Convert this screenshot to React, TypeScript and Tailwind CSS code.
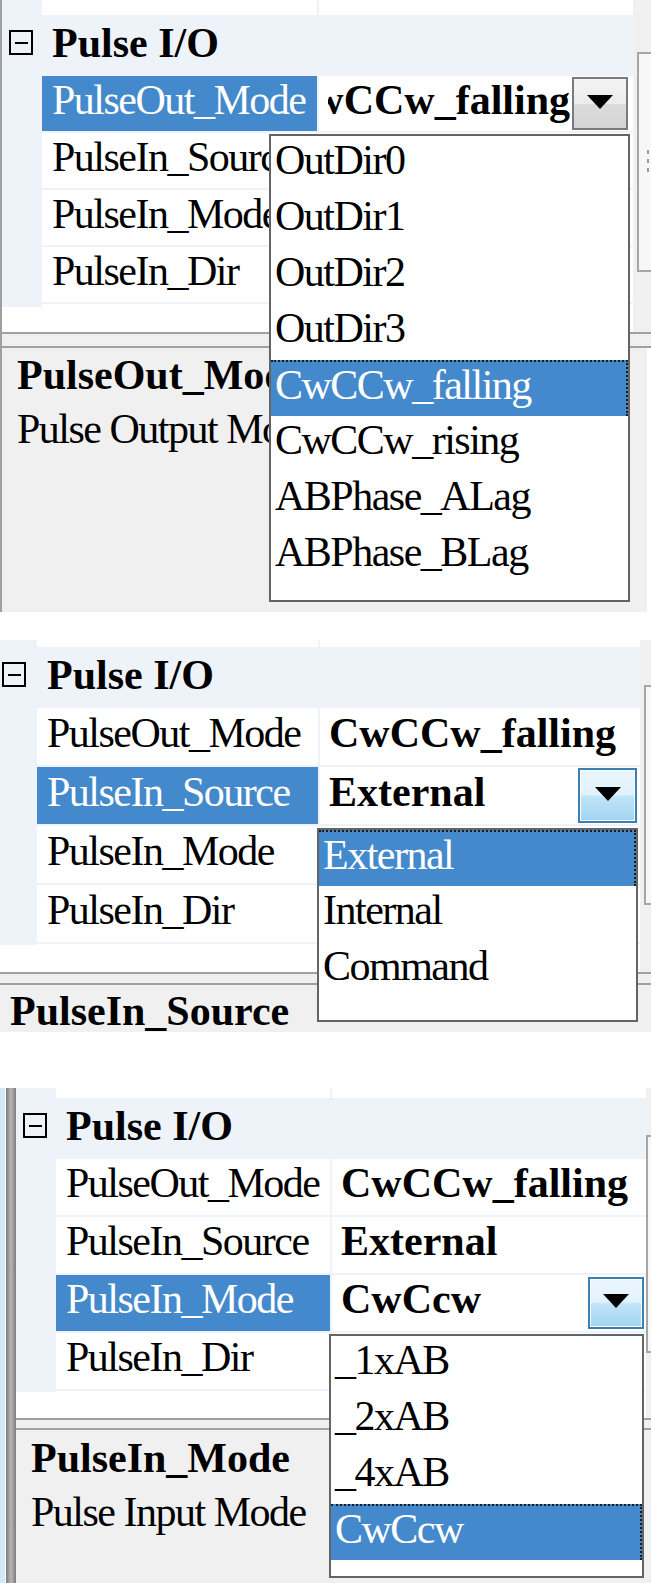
import React from "react";

type RowData = { label: string; value: string };

type Cfg = {
  panelH: string;
  decor: "border" | "none" | "stripes";
  gridW: string;
  gutterW: string;
  labelW: string;
  topRowH: string;
  boxPl: string;
  rowH: string;
  rowsAfterH: string;
  whiteH: string;
  splitH: string;
  selected: number;
  shown: number;
  rows: RowData[];
  button: "gray" | "blue";
  btnCls: string;
  scrolled: boolean;
  valuePl: string;
  dd: { pos: string; items: string[]; selected: number };
  desc: { title: string; text: string; cls: string; gap: string };
  thumb: string;
  grip: boolean;
};

const FONT = "font-['Liberation_Serif',serif]";
const GUT = "bg-[#eef3fa]";
const BLUE = "bg-[#4489cb]";

function Triangle() {
  return (
    <svg width="26" height="14" viewBox="0 0 26 14" className="block">
      <polygon points="0,0 26,0 13,14" fill="#000" />
    </svg>
  );
}

function DropButton({ kind, cls }: { kind: "gray" | "blue"; cls: string }) {
  const look =
    kind === "gray"
      ? "border-2 border-[#7a7a7a] bg-[linear-gradient(#f4f4f4_0%,#ececec_50%,#dcdcdc_52%,#d4d4d4_100%)]"
      : "border-2 border-[#3c7fb1] bg-[linear-gradient(#eaf6fd_0%,#e2f2fc_48%,#c0e4f8_52%,#a2d5f1_100%)] shadow-[inset_0_0_0_1px_#f6fcff]";
  return (
    <div className={`shrink-0 flex items-center justify-center pb-[4px] ${look} ${cls}`}>
      <Triangle />
    </div>
  );
}

function MinusBox() {
  return (
    <div className="w-[24px] h-[25px] border-2 border-black flex items-center justify-center">
      <div className="w-[13px] h-[2px] bg-black" />
    </div>
  );
}

function LeftDecor({ kind }: { kind: Cfg["decor"] }) {
  if (kind === "border") return <div className="w-[2px] shrink-0 bg-[#a0a0a0]" />;
  if (kind === "stripes")
    return (
      <div className="flex shrink-0 w-[16px]">
        <div className="w-[5px] bg-[#d2eaf7]" />
        <div className="w-[1px] bg-white" />
        <div className="w-[10px] bg-[linear-gradient(90deg,#7c7c7c,#b6b6b6,#7c7c7c)]" />
      </div>
    );
  return null;
}

function Panel({ c }: { c: Cfg }) {
  return (
    <div className={`relative w-[651px] shrink-0 flex ${c.panelH} ${FONT} text-black`}>
      <LeftDecor kind={c.decor} />
      <div className="flex flex-col flex-1 min-w-0">
        <div className="flex">
          <div className={`flex flex-col shrink-0 ${c.gridW}`}>
            {/* partial row above the category */}
            <div className={`flex ${c.topRowH}`}>
              <div className={`${c.gutterW} ${GUT}`} />
              <div className={`${c.labelW} bg-white`} />
              <div className={`w-[2px] ${GUT}`} />
              <div className="flex-1 bg-white" />
            </div>
            {/* category */}
            <div className={`flex items-center h-[61px] pb-[6px] ${GUT}`}>
              <div className={`${c.gutterW} shrink-0 ${c.boxPl}`}>
                <MinusBox />
              </div>
              <span className="pl-[10px] text-[42px] leading-[42px] font-bold whitespace-nowrap">Pulse I/O</span>
            </div>
            {/* property rows */}
            <div className={`flex flex-col gap-[2px] pb-[2px] ${GUT}`}>
              {c.rows.map((r, i) => {
                const sel = i === c.selected;
                const val = i < c.shown ? r.value : "";
                return (
                  <div key={r.label} className={`flex ${c.rowH}`}>
                    <div className={`${c.gutterW} shrink-0 ${GUT}`} />
                    <div
                      className={`${c.labelW} shrink-0 flex items-center pl-[10px] overflow-hidden ${
                        sel ? `${BLUE} text-white` : "bg-white"
                      }`}
                    >
                      <span className="text-[42px] leading-[42px] tracking-[-1.5px] whitespace-nowrap pb-[8px]">
                        {r.label}
                      </span>
                    </div>
                    <div className={`w-[2px] shrink-0 ${GUT}`} />
                    <div className={`flex-1 min-w-0 bg-white flex items-center ${c.valuePl}`}>
                      {sel && c.scrolled ? (
                        <div className="flex-1 min-w-0 overflow-hidden flex justify-end mr-[2px]">
                          <span className="shrink-0 font-bold text-[42px] leading-[42px] whitespace-nowrap pt-[3px] pb-[11px]">
                            {val}
                          </span>
                        </div>
                      ) : (
                        <span className="flex-1 min-w-0 font-bold text-[42px] leading-[42px] whitespace-nowrap pt-[3px] pb-[11px]">
                          {val}
                        </span>
                      )}
                      {sel && <DropButton kind={c.button} cls={c.btnCls} />}
                    </div>
                  </div>
                );
              })}
            </div>
            <div className={`flex ${c.rowsAfterH}`}>
              <div className={`${c.gutterW} ${GUT}`} />
              <div className="flex-1 bg-white" />
            </div>
            <div className={`${c.whiteH} bg-white`} />
          </div>
          {/* right strip with scrollbar thumb */}
          <div className="flex-1 bg-[#f0f0f0] flex flex-col">
            <div className={`border-l-2 border-t-2 border-b-2 border-[#a6a6a6] bg-[#f7f7f7] flex flex-col items-end pr-[2px] ${c.thumb}`}>
              {c.grip && (
                <div className="mt-[96px] flex flex-col gap-[5px]">
                  <div className="w-[2px] h-[4px] bg-[#9a9a9a]" />
                  <div className="w-[2px] h-[4px] bg-[#9a9a9a]" />
                  <div className="w-[2px] h-[4px] bg-[#9a9a9a]" />
                </div>
              )}
            </div>
          </div>
        </div>
        <div className="h-[2px] bg-[#a0a0a0]" />
        <div className={`${c.splitH} bg-[#f0f0f0]`} />
        <div className="h-[2px] bg-[#a0a0a0]" />
        <div className={`flex-1 min-h-0 overflow-hidden bg-[#f0f0f0] ${c.desc.cls}`}>
          <div className="font-bold text-[42px] leading-[42px] whitespace-nowrap">{c.desc.title}</div>
          <div className={`text-[42px] leading-[42px] tracking-[-1.5px] whitespace-nowrap ${c.desc.gap}`}>
            {c.desc.text}
          </div>
        </div>
      </div>
      {/* open dropdown list */}
      <div className={`absolute bg-white border-2 border-[#646464] flex flex-col ${c.dd.pos}`}>
        {c.dd.items.map((it, i) => {
          const sel = i === c.dd.selected;
          return (
            <div
              key={it}
              className={`h-[56px] shrink-0 flex items-center pl-[4px] ${
                sel ? `${BLUE} text-white border-t-2 border-r-2 border-dotted border-[#1c1c1c]` : ""
              }`}
            >
              <span className="text-[42px] leading-[42px] tracking-[-1.5px] whitespace-nowrap pb-[8px]">{it}</span>
            </div>
          );
        })}
      </div>
    </div>
  );
}

const rowsFor = (): RowData[] => [
  { label: "PulseOut_Mode", value: "CwCCw_falling" },
  { label: "PulseIn_Source", value: "External" },
  { label: "PulseIn_Mode", value: "CwCcw" },
  { label: "PulseIn_Dir", value: "" },
];

const panel1: Cfg = {
  panelH: "h-[612px]",
  decor: "border",
  gridW: "w-[631px]",
  gutterW: "w-[40px]",
  labelW: "w-[275px]",
  topRowH: "h-[15px]",
  boxPl: "pl-[7px]",
  rowH: "h-[55px]",
  rowsAfterH: "h-[3px]",
  whiteH: "h-[25px]",
  splitH: "h-[12px]",
  selected: 0,
  shown: 1,
  rows: rowsFor(),
  button: "gray",
  btnCls: "w-[56px] h-[53px] mr-[5px]",
  scrolled: true,
  valuePl: "pl-[9px]",
  dd: {
    pos: "left-[269px] top-[134px] w-[361px] h-[468px]",
    items: [
      "OutDir0",
      "OutDir1",
      "OutDir2",
      "OutDir3",
      "CwCCw_falling",
      "CwCCw_rising",
      "ABPhase_ALag",
      "ABPhase_BLag",
    ],
    selected: 4,
  },
  desc: {
    title: "PulseOut_Mode",
    text: "Pulse Output Mode",
    cls: "pl-[15px] pt-[6px] mr-[4px]",
    gap: "mt-[12px]",
  },
  thumb: "ml-[4px] mt-[52px] h-[220px]",
  grip: true,
};

const panel2: Cfg = {
  panelH: "h-[392px]",
  decor: "none",
  gridW: "w-[640px]",
  gutterW: "w-[37px]",
  labelW: "w-[281px]",
  topRowH: "h-[7px]",
  boxPl: "pl-[2px]",
  rowH: "h-[57px]",
  rowsAfterH: "h-[1px]",
  whiteH: "h-[27px]",
  splitH: "h-[9px]",
  selected: 1,
  shown: 2,
  rows: rowsFor(),
  button: "blue",
  btnCls: "w-[59px] h-[55px] mr-[3px]",
  scrolled: false,
  valuePl: "pl-[9px]",
  dd: {
    pos: "left-[317px] top-[188px] w-[321px] h-[194px]",
    items: ["External", "Internal", "Command"],
    selected: 0,
  },
  desc: {
    title: "PulseIn_Source",
    text: "Pulse Input Source",
    cls: "pl-[10px] pt-[5px]",
    gap: "mt-[12px]",
  },
  thumb: "ml-[4px] mt-[45px] h-[220px]",
  grip: false,
};

const panel3: Cfg = {
  panelH: "h-[495px]",
  decor: "stripes",
  gridW: "w-[630px]",
  gutterW: "w-[40px]",
  labelW: "w-[274px]",
  topRowH: "h-[10px]",
  boxPl: "pl-[7px]",
  rowH: "h-[56px]",
  rowsAfterH: "h-[1px]",
  whiteH: "h-[26px]",
  splitH: "h-[8px]",
  selected: 2,
  shown: 3,
  rows: rowsFor(),
  button: "blue",
  btnCls: "w-[56px] h-[52px] mr-[2px]",
  scrolled: false,
  valuePl: "pl-[9px]",
  dd: {
    pos: "left-[329px] top-[246px] w-[315px] h-[244px]",
    items: ["_1xAB", "_2xAB", "_4xAB", "CwCcw"],
    selected: 3,
  },
  desc: {
    title: "PulseIn_Mode",
    text: "Pulse Input Mode",
    cls: "pl-[15px] pt-[7px]",
    gap: "mt-[12px]",
  },
  thumb: "ml-0 mt-[47px] h-[218px]",
  grip: false,
};

export default function App() {
  return (
    <div className="w-[651px] h-[1583px] bg-white overflow-hidden flex flex-col">
      <Panel c={panel1} />
      <div className="h-[28px] shrink-0" />
      <Panel c={panel2} />
      <div className="h-[56px] shrink-0" />
      <Panel c={panel3} />
    </div>
  );
}
